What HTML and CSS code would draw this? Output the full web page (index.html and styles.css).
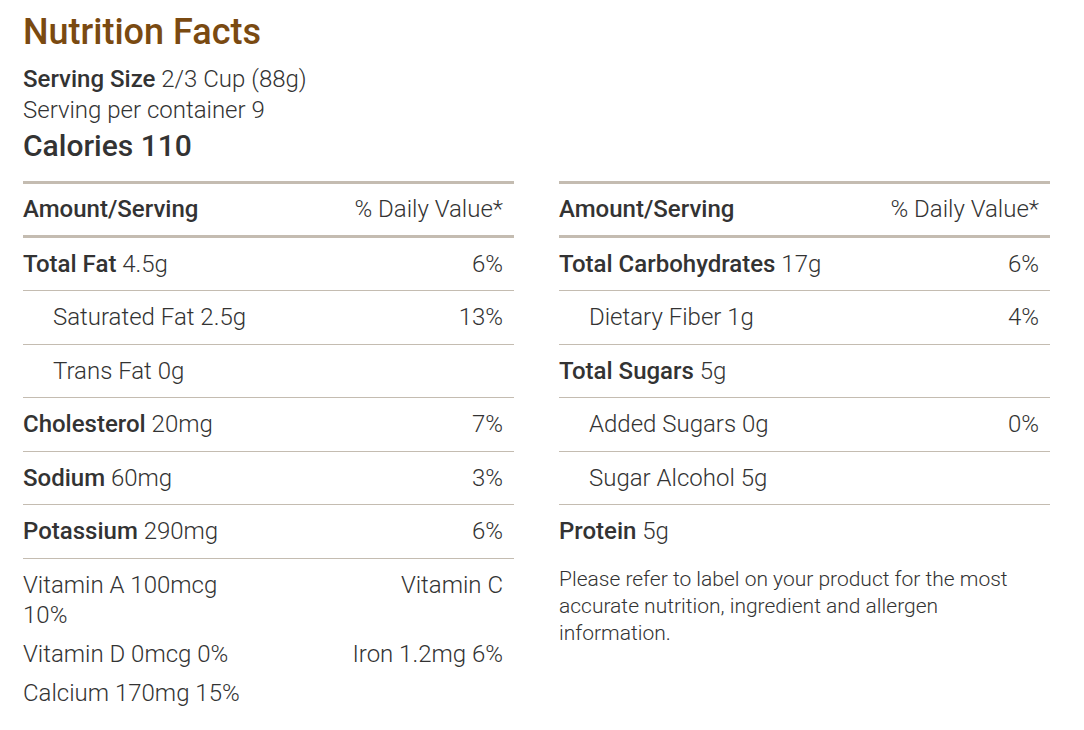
FILE: index.html
```html
<!DOCTYPE html>
<html>
<head>
<meta charset="utf-8">
<link rel="stylesheet" href="styles.css">
</head>
<body>
<div class="page">
  <h1 class="title">Nutrition Facts</h1>
  <div class="serving first"><b>Serving Size</b> 2/3 Cup (88g)</div>
  <div class="serving">Serving per container 9</div>
  <div class="calories">Calories 110</div>
  <div class="columns">
    <div class="col">
      <div class="table">
        <div class="row head"><b>Amount/Serving</b><span>% Daily Value*</span></div>
        <div class="row"><span><b>Total Fat</b> 4.5g</span><span>6%</span></div>
        <div class="row sub"><span>Saturated Fat 2.5g</span><span>13%</span></div>
        <div class="row sub"><span>Trans Fat 0g</span><span></span></div>
        <div class="row"><span><b>Cholesterol</b> 20mg</span><span>7%</span></div>
        <div class="row"><span><b>Sodium</b> 60mg</span><span>3%</span></div>
        <div class="row"><span><b>Potassium</b> 290mg</span><span>6%</span></div>
      </div>
      <div class="vitamins">
        <div class="vit">Vitamin A 100mcg 10%</div>
        <div class="vit right">Vitamin C</div>
        <div class="vit">Vitamin D 0mcg 0%</div>
        <div class="vit right">Iron 1.2mg 6%</div>
        <div class="vit">Calcium 170mg 15%</div>
      </div>
    </div>
    <div class="col">
      <div class="table">
        <div class="row head"><b>Amount/Serving</b><span>% Daily Value*</span></div>
        <div class="row"><span><b>Total Carbohydrates</b> 17g</span><span>6%</span></div>
        <div class="row sub"><span>Dietary Fiber 1g</span><span>4%</span></div>
        <div class="row"><span><b>Total Sugars</b> 5g</span><span></span></div>
        <div class="row sub"><span>Added Sugars 0g</span><span>0%</span></div>
        <div class="row sub"><span>Sugar Alcohol 5g</span><span></span></div>
        <div class="row last"><span><b>Protein</b> 5g</span><span></span></div>
      </div>
      <p class="note">Please refer to label on your product for the most accurate nutrition, ingredient and allergen information.</p>
    </div>
  </div>
</div>
</body>
</html>
```

FILE: styles.css
```css
html, body {
  margin: 0;
  padding: 0;
  background: #ffffff;
}
body {
  font-family: Roboto, "Liberation Sans", sans-serif;
  font-weight: 300;
  color: #333333;
}
b {
  font-weight: 500;
}
.page {
  padding: 11px 34px 0 23px;
}
.title {
  margin: 0;
  font-size: 36px;
  line-height: 42px;
  font-weight: 500;
  color: #7a4a11;
}
.serving {
  font-size: 24px;
  line-height: 31px;
}
.serving.first {
  margin-top: 11px;
}
.calories {
  font-size: 30px;
  line-height: 40px;
  font-weight: 500;
}
.columns {
  display: grid;
  grid-template-columns: 491px 491px;
  column-gap: 45px;
  margin-top: 15px;
}
.table {
  border-top: 3px solid #c4bcb1;
}
.row {
  display: flex;
  justify-content: space-between;
  font-size: 24px;
  line-height: 32.5px;
  padding: 10px 11px 10px 0;
  border-bottom: 1px solid #c4bcb1;
}
.row.head {
  border-bottom: 3px solid #c4bcb1;
  padding: 9px 11px 9px 0;
}
.row.sub {
  padding-left: 30px;
}
.row.last {
  border-bottom: none;
}
.vitamins {
  display: grid;
  grid-template-columns: 1fr 1fr;
  padding-right: 11px;
  row-gap: 9px;
  margin-top: 11px;
  font-size: 24px;
  line-height: 30px;
}
.vit.right {
  text-align: right;
}
.note {
  margin: 8px 0 0;
  font-size: 21px;
  line-height: 27px;
  padding-right: 20px;
}
```
